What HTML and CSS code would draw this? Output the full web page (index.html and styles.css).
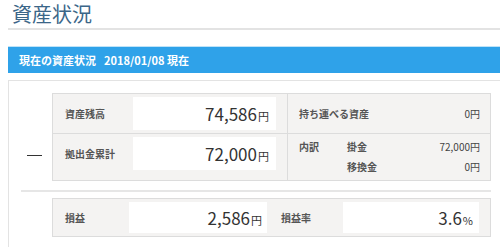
FILE: index.html
```html
<!DOCTYPE html>
<html lang="ja">
<head>
    <meta charset="UTF-8">
    <meta name="viewport" content="width=device-width, initial-scale=1.0">
    <title>資産状況</title>
    <link rel="stylesheet" href="styles.css">
</head>
<body>
    <div class="page">
        <h1 class="title">資産状況</h1>

        <!-- 現在の資産状況 -->
        <div class="bar">現在の資産状況<span class="bar-date">2018/01/08 現在</span></div>

        <div class="box">
            <div class="calc">
                <div class="op"><span class="minus"></span></div>
                <div class="sheet sheet-top">
                    <div class="cell label">資産残高</div>
                    <div class="cell value"><div class="val">74,586<small>円</small></div></div>
                    <div class="cell side">
                        <div class="side-row">
                            <span class="side-label">持ち運べる資産</span>
                            <span class="side-num">0円</span>
                        </div>
                    </div>

                    <div class="cell label last">拠出金累計</div>
                    <div class="cell value last"><div class="val">72,000<small>円</small></div></div>
                    <div class="cell side last">
                        <div class="breakdown">
                            <span class="side-label">内訳</span>
                            <span class="side-label">掛金</span>
                            <span class="side-num">72,000円</span>
                            <span></span>
                            <span class="side-label">移換金</span>
                            <span class="side-num">0円</span>
                        </div>
                    </div>
                </div>
            </div>

            <hr class="sep">

            <div class="calc">
                <div class="op"></div>
                <div class="sheet sheet-bottom">
                    <div class="cell label">損益</div>
                    <div class="cell value"><div class="val val-a">2,586<small>円</small></div></div>
                    <div class="cell label">損益率</div>
                    <div class="cell value"><div class="val val-b">3.6<small>%</small></div></div>
                </div>
            </div>
        </div>
    </div>
</body>
</html>
```

FILE: styles.css
```css
html, body {
    overflow: hidden;
}
body {
    font-family: "Noto Sans CJK JP", "Noto Sans", sans-serif;
    margin: 0;
    padding: 0;
    background-color: #fff;
    color: #333;
}
.page {
    width: 496px;
    margin-left: 8px;
}
.title {
    margin: 0;
    padding-left: 4px;
    height: 28px;
    line-height: 28px;
    font-size: 20px;
    font-weight: normal;
    color: #3b6688;
    border-bottom: 2px solid #e3e3e3;
}
.bar {
    margin-top: 16px;
    height: 26px;
    line-height: 26px;
    padding-left: 11px;
    background-color: #2fa2e9;
    border-top: 1px solid #bfe3f8;
    color: #fff;
    font-size: 11px;
    font-weight: bold;
}
.bar-date {
    margin-left: 8px;
}
.box {
    margin-top: 7px;
    border: 1px solid #e3e3e3;
    border-bottom: none;
    padding: 12px 12px 12px 12px;
    height: 200px;
}
.calc {
    display: flex;
}
.op {
    width: 31px;
    flex: none;
    padding-top: 62px;
}
.minus {
    display: block;
    width: 15px;
    margin-left: 6px;
    border-top: 1px solid #333;
}
.sheet {
    flex: 1;
    display: grid;
    background: #f4f3f2;
    border: 1px solid #dcdcdc;
}
.sheet-top {
    grid-template-columns: 80px 154px 1fr;
    grid-template-rows: 40px 46px;
}
.sheet-top .cell {
    border-bottom: 1px solid #dcdcdc;
}
.sheet-top .cell.last {
    border-bottom: none;
}
.cell.label {
    padding: 3px 0 0 12px;
    line-height: 33px;
    font-size: 10px;
    font-weight: bold;
    color: #555;
}
.sheet-top .value {
    padding: 3px 11px 0 0;
}
.val {
    height: 33px;
    line-height: 33px;
    background: #fff;
    text-align: right;
    padding-right: 7px;
    font-size: 17px;
    color: #333;
}
.val small {
    font-size: 11px;
    margin-left: 1px;
}
.side {
    border-left: 1px solid #dcdcdc;
    padding: 3px 10px 0 11px;
}
.side-row {
    display: flex;
    justify-content: space-between;
    line-height: 33px;
}
.side-label {
    font-size: 10px;
    font-weight: bold;
    color: #555;
}
.side-num {
    font-size: 10px;
    color: #444;
    text-align: right;
}
.breakdown {
    display: grid;
    grid-template-columns: 48px 1fr auto;
    grid-auto-rows: 20px;
    line-height: 20px;
}
.sep {
    margin: 9px 0 6px 0;
    border: none;
    border-top: 2px solid #e6e6e6;
}
.sheet-bottom {
    grid-template-columns: 76px 138px 76px 136px;
    padding-right: 11px;
    height: 37px;
}
.sheet-bottom .label {
    padding-top: 3px;
    line-height: 31px;
}
.sheet-bottom .label + .value + .label {
    padding-left: 14px;
}
.sheet-bottom .value {
    padding: 3px 0;
}
.sheet-bottom .val {
    height: 31px;
    line-height: 31px;
}
.val-a {
    padding-right: 5px;
}
.val-b {
    padding-right: 6px;
}
```
